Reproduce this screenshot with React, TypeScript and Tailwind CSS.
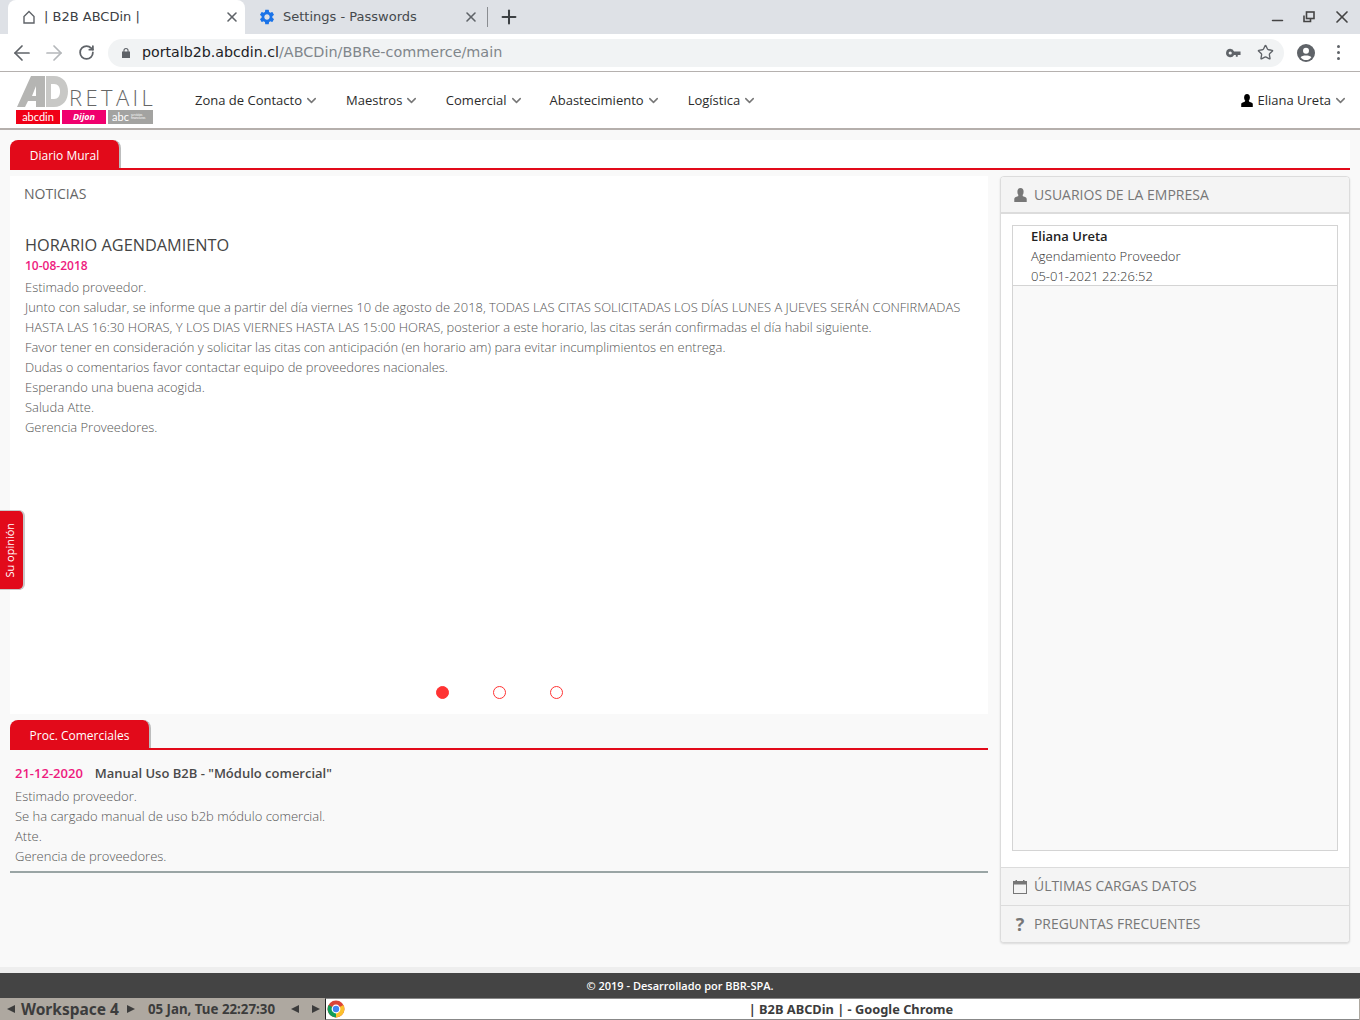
import React from "react";
import { ArrowLeft, ArrowRight, RotateCw, Star, Plus, X, Minus, ChevronDown } from "lucide-react";
import { MdSettings } from "react-icons/md";

const UI = "font-['DejaVu_Sans',sans-serif]";
const PAGE = "font-['Open_Sans',sans-serif]";

function Person({ className }: { className?: string }) {
  return (
    <svg viewBox="1 0 12 13.5" className={className} fill="currentColor">
      <ellipse cx="7" cy="3.7" rx="3" ry="3.7" />
      <path d="M5 6.5 L9 6.5 L9.3 8 C11.5 8.6 13 9.3 13 10.5 L13 13.5 L1 13.5 L1 10.5 C1 9.3 2.5 8.6 4.7 8 Z" />
    </svg>
  );
}

function Logo() {
  return (
    <div className="flex flex-col w-[137px] -mt-[1px]">
      <div className="h-[34px] flex items-start">
        <svg viewBox="0 0 52 31" className="w-[52px] h-[31px] shrink-0">
          <path d="M1 31 L15 0 L29 0 L29 31 L20 31 L20 25 L12 25 L9 31 Z" fill="#b5b5b3" />
          <path d="M16 20 L20 20 L20 10 Z" fill="#fff" />
          <path d="M30 0 L38 0 C47 0 52 7 52 15.5 C52 24 47 31 38 31 L30 31 Z" fill="#c8c8c6" />
          <path d="M35 8 L38 8 C42 8 44 11 44 15.5 C44 20 42 23 38 23 L35 23 Z" fill="#fff" />
        </svg>
        <span className={`${PAGE} text-[22px] leading-[22px] font-light text-[#666] tracking-[3.4px] ml-[1px] mt-[10px] whitespace-nowrap`}>RETAIL</span>
      </div>
      <div className="flex gap-[2px] h-[14px]">
        <div className="w-[44px] bg-[#f00017] text-white text-[11px] leading-[13px] text-center font-['Lato',sans-serif]">abcdin</div>
        <div className="w-[44px] bg-[#f0006e] text-white text-[9px] leading-[14px] text-center font-bold font-['Open_Sans',sans-serif] italic">Dijon</div>
        <div className="flex-1 bg-[#a3a3a1] text-white flex items-center justify-center gap-[2px] font-['Lato',sans-serif]">
          <span className="text-[11px] leading-[13px]">abc</span>
          <span className="text-[3px] leading-[3px] w-[18px]">servicios financieros</span>
        </div>
      </div>
    </div>
  );
}

function NavItem({ label, className }: { label: string; className?: string }) {
  return (
    <div className={`flex items-center text-[13px] text-[#2b2b2b] ${className ?? ""}`}>
      <span className="mt-[2px]">{label}</span>
      <ChevronDown className="w-[15px] h-[15px] ml-[2px] mt-[1px] text-[#777]" strokeWidth={2.4} />
    </div>
  );
}

function TabHeader({ label, width }: { label: string; width: string }) {
  return (
    <div className="border-b-2 border-[#e20a1a] h-[30px] flex items-end">
      <div className={`${width} h-[28px] bg-[#e20a1a] rounded-t-[8px] text-white text-[12px] leading-[31px] text-center border-r-2 border-[#bdbdbd]`}>{label}</div>
    </div>
  );
}

const news = [
  "Estimado proveedor.",
  "Junto con saludar, se informe que a partir del día viernes 10 de agosto de 2018, TODAS LAS CITAS SOLICITADAS LOS DÍAS LUNES A JUEVES SERÁN CONFIRMADAS",
  "HASTA LAS 16:30 HORAS, Y LOS DIAS VIERNES HASTA LAS 15:00 HORAS, posterior a este horario, las citas serán confirmadas el día habil siguiente.",
  "Favor tener en consideración y solicitar las citas con anticipación (en horario am) para evitar incumplimientos en entrega.",
  "Dudas o comentarios favor contactar equipo de proveedores nacionales.",
  "Esperando una buena acogida.",
  "Saluda Atte.",
  "Gerencia Proveedores.",
];

const proc = ["Estimado proveedor.", "Se ha cargado manual de uso b2b módulo comercial.", "Atte.", "Gerencia de proveedores."];

export default function App() {
  return (
    <div className="relative w-[1360px] h-[1020px] overflow-hidden flex flex-col bg-white">
      {/* Chrome tab strip */}
      <div className={`${UI} h-[34px] bg-[#dee1e6] flex items-start shrink-0 pl-[8px] text-[13px] text-[#3c4043]`}>
        <div className="w-[237px] h-[34px] bg-white rounded-t-[8px] flex items-center pl-[14px] pr-[5px]">
          <svg viewBox="0 0 14 14" className="w-[14px] h-[14px]" fill="none" stroke="#5f6368" strokeWidth="1.4">
            <path d="M2 6.5 L7 1.5 L12 6.5 V13 H2 Z" />
          </svg>
          <span className="ml-[8px]">| B2B ABCDin |</span>
          <X className="w-[16px] h-[16px] ml-auto text-[#5f6368]" strokeWidth={2.4} />
        </div>
        <div className="w-[243px] h-[34px] flex items-center pl-[13px]">
          <MdSettings className="w-[18px] h-[18px] text-[#1a73e8]" />
          <span className="ml-[7px] text-[#45494d]">Settings - Passwords</span>
          <X className="w-[16px] h-[16px] ml-auto mr-[8px] text-[#5f6368]" strokeWidth={2.4} />
          <div className="w-px h-[20px] bg-[#8a8d91]" />
        </div>
        <div className="h-[34px] flex items-center ml-[10px]">
          <Plus className="w-[22px] h-[22px] text-[#3c4043]" strokeWidth={2.2} />
        </div>
        <div className="ml-auto h-[34px] flex items-center pr-[8px] text-[#444]">
          <Minus className="w-[17px] h-[17px] mt-[6px]" strokeWidth={2.2} />
          <svg viewBox="0 0 12 12" className="w-[12px] h-[12px] ml-[17px]" fill="none" stroke="#444" strokeWidth="1.6">
            <rect x="3.5" y="1" width="7.5" height="6.5" />
            <path d="M1 4.5 V10.5 H7.5 V8" />
          </svg>
          <X className="w-[20px] h-[20px] ml-[17px]" strokeWidth={2} />
        </div>
      </div>

      {/* Chrome toolbar */}
      <div className={`${UI} h-[38px] bg-white border-b border-[#b5b1af] flex items-center shrink-0 pl-[10px]`}>
        <ArrowLeft className="w-[24px] h-[24px] text-[#5f6368]" strokeWidth={1.7} />
        <ArrowRight className="w-[24px] h-[24px] ml-[8px] text-[#b4b7ba]" strokeWidth={1.7} />
        <RotateCw className="w-[17px] h-[17px] ml-[12px] text-[#5f6368]" strokeWidth={2.5} />
        <div className="ml-[13px] w-[1176px] h-[28px] rounded-full bg-[#f1f3f4] flex items-center pl-[14px] pr-[10px]">
          <svg viewBox="0 0 8 10" className="w-[8px] h-[10px] shrink-0" fill="#5f6368">
            <path fillRule="evenodd" d="M1.4 3.6 V2.6 A2.6 2.6 0 0 1 6.6 2.6 V3.6 H8 V10 H0 V3.6 Z M2.5 3.6 H5.5 V2.6 A1.5 1.5 0 0 0 2.5 2.6 Z" />
          </svg>
          <span className="ml-[12px] text-[#202124] text-[14.2px]">portalb2b.abcdin.cl</span>
          <span className="text-[#80868b] text-[14.4px]">/ABCDin/BBRe-commerce/main</span>
          <svg viewBox="0 0 16 10" className="w-[15px] h-[10px] ml-auto" fill="#5f6368">
            <path d="M4.5 0.5 A4.5 4.5 0 1 0 8.6 7 H10.5 V9 H12.5 V7 H15.5 V3.5 H8.6 A4.5 4.5 0 0 0 4.5 0.5 Z M4.5 3.3 A1.7 1.7 0 1 1 4.5 6.7 A1.7 1.7 0 0 1 4.5 3.3 Z" />
          </svg>
          <Star className="w-[17px] h-[17px] ml-[16px] text-[#5f6368]" strokeWidth={1.9} />
        </div>
        <svg viewBox="0 0 18 18" className="w-[18px] h-[18px] ml-[13px]">
          <circle cx="9" cy="9" r="9" fill="#5f6368" />
          <circle cx="9" cy="6.8" r="3" fill="#fff" />
          <path d="M3.6 13.2 C5 10.9 13 10.9 14.4 13.2 C13 15.2 11 16 9 16 C7 16 5 15.2 3.6 13.2 Z" fill="#fff" />
        </svg>
        <div className="ml-[22px] flex flex-col gap-[3px]">
          <span className="w-[3px] h-[3px] rounded-full bg-[#5f6368]" />
          <span className="w-[3px] h-[3px] rounded-full bg-[#5f6368]" />
          <span className="w-[3px] h-[3px] rounded-full bg-[#5f6368]" />
        </div>
      </div>

      {/* Site nav */}
      <div className={`${PAGE} h-[58px] bg-white border-b-2 border-[#b5afac] flex items-center shrink-0 pl-[16px] pr-[12px]`}>
        <Logo />
        <NavItem label="Zona de Contacto" className="ml-[42px]" />
        <NavItem label="Maestros" className="ml-[27px]" />
        <NavItem label="Comercial" className="ml-[26.5px]" />
        <NavItem label="Abastecimiento" className="ml-[26px]" />
        <NavItem label="Logística" className="ml-[27px]" />
        <div className="ml-auto flex items-center">
          <Person className="w-[12px] h-[13px] text-black mr-[4px]" />
          <NavItem label="Eliana Ureta" />
        </div>
      </div>

      {/* Body */}
      <div className={`${PAGE} flex-1 bg-[#f9f9f9] px-[10px] pt-[10px] flex flex-col`}>
        <div className="bg-white">
          <TabHeader label="Diario Mural" width="w-[111px]" />
        </div>
        <div className="flex gap-[12px] mt-[6px]">
          <div className="w-[978px] shrink-0">
            <div className="h-[538px] bg-white relative flex flex-col">
              <div className="pl-[14px] pt-[8px] text-[14px] leading-[20px] text-[#666]">NOTICIAS</div>
              <div className="pl-[15px] mt-[30px] text-[16.3px] leading-[22px] text-[#444] font-medium">HORARIO AGENDAMIENTO</div>
              <div className="pl-[15px] text-[12px] leading-[20px] font-semibold text-[#ee1a7e]">10-08-2018</div>
              <div className="pl-[15px] mt-[1px] text-[12.95px] leading-[20px] font-light text-[#555] whitespace-nowrap">
                {news.map((l) => (
                  <div key={l}>{l}</div>
                ))}
              </div>
              <div className="mt-auto mb-[15px] flex justify-center gap-[44px]">
                <span className="w-[13px] h-[13px] rounded-full bg-[#ff3333] border border-[#ff3333]" />
                <span className="w-[13px] h-[13px] rounded-full border border-[#ff3333]" />
                <span className="w-[13px] h-[13px] rounded-full border border-[#ff3333]" />
              </div>
            </div>
            <div className="mt-[6px]">
              <TabHeader label="Proc. Comerciales" width="w-[141px]" />
            </div>
            <div className="border-b-2 border-[#9aa5a5] pl-[5px] pt-[13px] pb-[5px]">
              <div className="flex text-[13px] leading-[20px] font-semibold">
                <span className="text-[#ee1a7e]">21-12-2020</span>
                <span className="ml-[12px] text-[#4a4a4a]">Manual Uso B2B - "Módulo comercial"</span>
              </div>
              <div className="mt-[3px] text-[13px] leading-[20px] font-light text-[#555]">
                {proc.map((l) => (
                  <div key={l}>{l}</div>
                ))}
              </div>
            </div>
          </div>

          <div className="w-[350px] h-[767px] border border-[#dcdcdc] rounded-[4px] bg-white flex flex-col shadow-[0_1px_2px_rgba(0,0,0,0.12)] overflow-hidden">
            <div className="h-[37px] shrink-0 bg-[#f4f4f4] border-b-2 border-[#dcdcdc] flex items-center text-[14px] text-[#777]">
              <Person className="w-[13px] h-[14px] ml-[13px] text-[#777]" />
              <span className="ml-[7px]">USUARIOS DE LA EMPRESA</span>
            </div>
            <div className="flex-1 bg-white pl-[11px] pr-[11px] pt-[11px] pb-[16px]">
              <div className="h-full border border-[#d4d4d4] bg-[#f9f9f9] flex flex-col">
                <div className="h-[60px] bg-white border-b border-[#d4d4d4] pl-[18px] text-[13px] leading-[20px] text-[#444]">
                  <div className="font-semibold text-[#222]">Eliana Ureta</div>
                  <div className="font-light text-[#333]">Agendamiento Proveedor</div>
                  <div className="font-light text-[#333]">05-01-2021 22:26:52</div>
                </div>
              </div>
            </div>
            <div className="h-[38px] shrink-0 bg-[#f4f4f4] border-t border-[#dcdcdc] flex items-center text-[13.9px] text-[#777]">
              <svg viewBox="0 0 14 14" className="w-[14px] h-[14px] ml-[12px]" fill="#777">
                <path d="M0 1 H2.5 V0 H4 V1 H10 V0 H11.5 V1 H14 V14 H0 Z M1 4.5 V13 H13 V4.5 Z" />
              </svg>
              <span className="ml-[7px]">ÚLTIMAS CARGAS DATOS</span>
            </div>
            <div className="h-[37px] pt-[1px] shrink-0 bg-[#f4f4f4] border-t border-[#dcdcdc] flex items-center text-[13.9px] text-[#777]">
              <span className="w-[14px] ml-[12px] text-center font-bold text-[18px] leading-[18px] -mt-[2px]">?</span>
              <span className="ml-[7px]">PREGUNTAS FRECUENTES</span>
            </div>
          </div>
        </div>
      </div>

      {/* Footer */}
      <div className="h-[6px] bg-[#eeeeee] shrink-0" />
      <div className={`${PAGE} h-[25px] bg-[#444444] text-white text-[11px] leading-[25px] font-semibold text-center shrink-0`}>© 2019 - Desarrollado por BBR-SPA.</div>

      {/* Desktop taskbar */}
      <div className="h-[22px] bg-[#aea8a0] flex items-center shrink-0 font-['Noto_Sans','Open_Sans',sans-serif] font-bold text-[#3c3c3c]">
        <span className="w-0 h-0 ml-[7px] border-y-[4px] border-y-transparent border-r-[8px] border-r-[#3c3c3c]" />
        <span className="ml-[6px] text-[15.5px] leading-[22px] whitespace-nowrap">Workspace 4</span>
        <span className="w-0 h-0 ml-[8px] border-y-[4px] border-y-transparent border-l-[8px] border-l-[#3c3c3c]" />
        <span className="ml-[13px] text-[13.3px] leading-[22px] whitespace-nowrap">05 Jan, Tue 22:27:30</span>
        <span className="w-0 h-0 ml-[16px] border-y-[4px] border-y-transparent border-r-[8px] border-r-[#3c3c3c]" />
        <span className="w-0 h-0 ml-[13px] border-y-[4px] border-y-transparent border-l-[8px] border-l-[#3c3c3c]" />
        <div className="ml-[5px] flex-1 mr-[1px] h-[22px] bg-white border-l border-l-[#222] border-y border-y-[#888] flex items-center">
          <svg viewBox="0 0 18 18" className="w-[18px] h-[18px] ml-[1px] shrink-0">
            <circle cx="9" cy="9" r="8.5" fill="#db4437" />
            <path d="M9 9 L16.4 5 A8.5 8.5 0 0 1 9 17.5 Z" fill="#fbc02d" />
            <path d="M9 9 L9 17.5 A8.5 8.5 0 0 1 1.6 5 Z" fill="#0f9d58" />
            <circle cx="9" cy="9" r="4.4" fill="#fff" />
            <circle cx="9" cy="9" r="3.2" fill="#4285f4" />
          </svg>
          <span className="flex-1 text-center text-[12.8px] leading-[20px] pr-[2px]">| B2B ABCDin | - Google Chrome</span>
        </div>
      </div>

      {/* Feedback tab */}
      <div className={`${PAGE} absolute left-0 top-[510px] w-[25px] h-[80px] bg-[#e20a1a] rounded-r-[6px] border-r-2 border-b border-t border-[#c9c9c9] flex items-center justify-center pr-[2px]`}>
        <span className="text-white text-[11px] whitespace-nowrap -rotate-90">Su opinión</span>
      </div>
    </div>
  );
}
